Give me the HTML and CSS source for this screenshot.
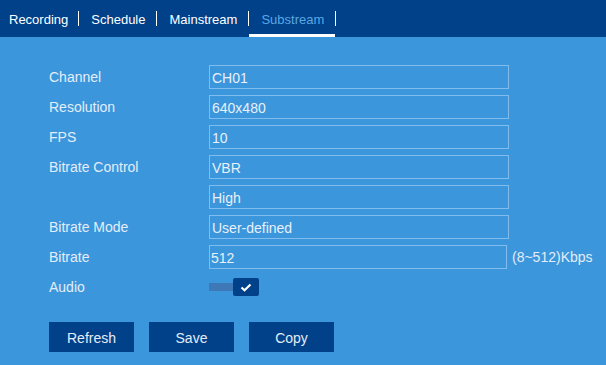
FILE: index.html
```html
<!DOCTYPE html>
<html>
<head>
<meta charset="utf-8">
<link rel="stylesheet" href="styles.css">
</head>
<body>
<div class="tabs">
  <div class="tab first">Recording</div><div class="sep"></div>
  <div class="tab">Schedule</div><div class="sep"></div>
  <div class="tab">Mainstream</div><div class="sep"></div>
  <div class="tab active">Substream</div><div class="sep"></div>
</div>
<div class="form">
  <div class="row"><div class="label">Channel</div><div class="field">CH01</div></div>
  <div class="row"><div class="label">Resolution</div><div class="field">640x480</div></div>
  <div class="row"><div class="label">FPS</div><div class="field">10</div></div>
  <div class="row"><div class="label">Bitrate Control</div><div class="field">VBR</div></div>
  <div class="row"><div class="label"></div><div class="field">High</div></div>
  <div class="row"><div class="label">Bitrate Mode</div><div class="field">User-defined</div></div>
  <div class="row"><div class="label">Bitrate</div><div class="field narrow">512</div><div class="unit">(8~512)Kbps</div></div>
  <div class="row"><div class="label">Audio</div>
    <div class="toggle"><div class="track"></div><div class="knob"><svg width="12" height="9" viewBox="0 0 12 9"><polyline points="1.5,4.5 4.5,7.2 10.5,1.5" fill="none" stroke="#fff" stroke-width="2.2"/></svg></div></div>
  </div>
  <div class="buttons">
    <div class="btn">Refresh</div>
    <div class="btn">Save</div>
    <div class="btn">Copy</div>
  </div>
</div>
</body>
</html>
```

FILE: styles.css
```css
html, body {
  margin: 0;
  padding: 0;
}
body {
  background: #3b96dc;
  font-family: "Liberation Sans", Arial, sans-serif;
  font-size: 14px;
  color: #e4edf7;
  width: 606px;
  height: 365px;
  overflow: hidden;
}
.tabs {
  display: flex;
  align-items: center;
  height: 37px;
  background: #00418a;
  font-size: 13px;
}
.tab {
  height: 37px;
  box-sizing: border-box;
  display: flex;
  align-items: center;
  padding: 1px 11px 0 12px;
  color: #ffffff;
  white-space: nowrap;
}
.tab.first {
  padding-left: 9px;
  padding-right: 10px;
}
.tab.active {
  color: #5aa8e2;
  box-shadow: inset 0 -3px 0 #ffffff;
}
.sep {
  width: 1px;
  height: 15px;
  background: #ffffff;
  flex: none;
}
.form {
  padding: 28px 0 0 49px;
  display: flex;
  flex-direction: column;
  gap: 6px;
}
.row {
  display: flex;
  align-items: center;
  height: 24px;
}
.label {
  width: 160px;
  flex: none;
}
.field {
  width: 300px;
  height: 24px;
  box-sizing: border-box;
  border: 1px solid #80bcee;
  padding: 1px 2px 0 2px;
  display: flex;
  align-items: center;
  color: #e8f0f9;
}
.field.narrow {
  width: 298px;
  padding-left: 1px;
}
.unit {
  margin-left: 5px;
}
.toggle {
  display: flex;
  align-items: center;
}
.track {
  width: 24px;
  height: 8px;
  background: #3f78b6;
}
.knob {
  width: 26px;
  height: 18px;
  background: #00418a;
  border-radius: 2px;
  display: flex;
  align-items: center;
  justify-content: center;
}
.buttons {
  display: flex;
  gap: 15px;
  margin-top: 17px;
}
.btn {
  width: 85px;
  height: 30px;
  background: #00418a;
  display: flex;
  align-items: center;
  justify-content: center;
  padding-top: 1px;
  box-sizing: border-box;
  color: #e4edf7;
}
```
